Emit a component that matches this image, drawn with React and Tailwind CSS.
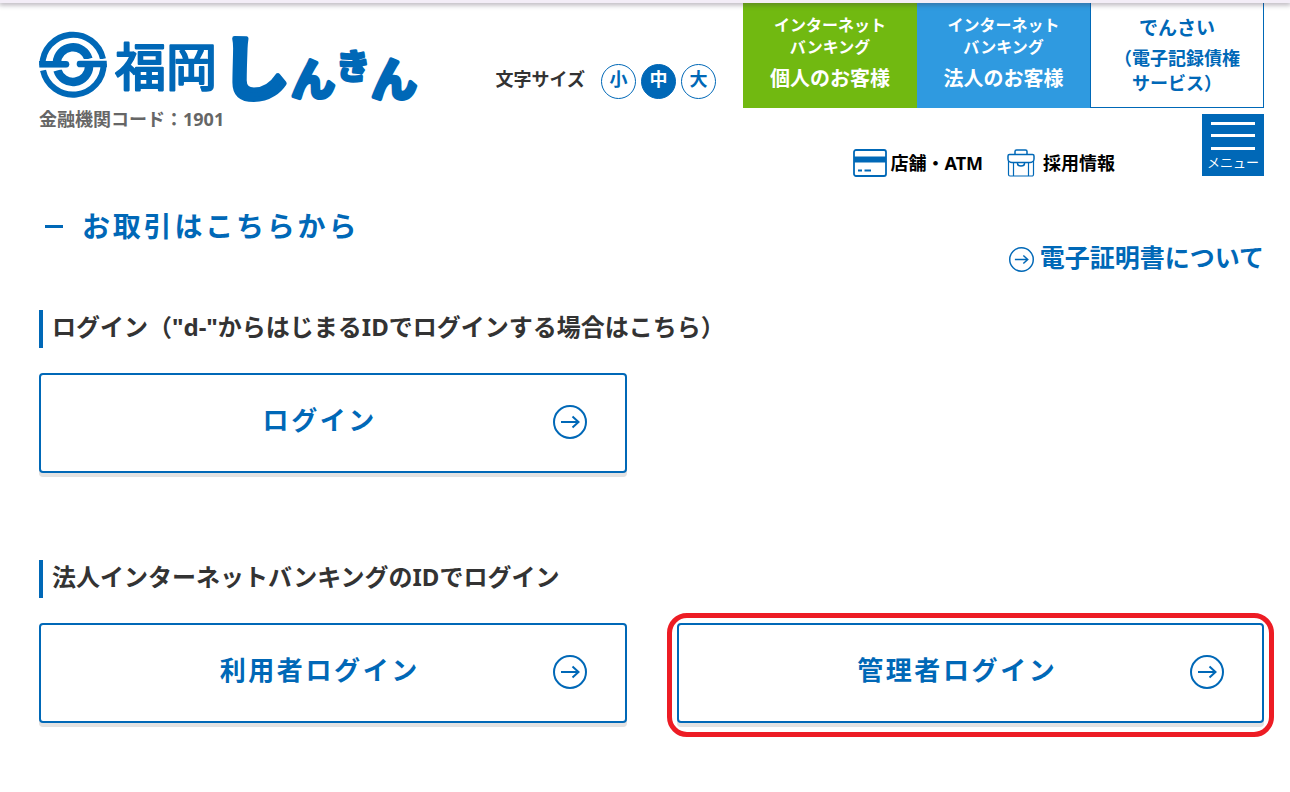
import React from "react";

function Emblem() {
  return (
    <svg viewBox="10 10 202 202" className="h-[68px] w-[68px] shrink-0" aria-hidden="true">
      <g fill="none" stroke="#0068b7">
        <path d="M20 112 A91 91 0 0 1 200 93" strokeWidth="18" />
        <path d="M202 108 A91 91 0 0 1 22 127" strokeWidth="18" />
        <path d="M63 104 A48 48 0 0 1 157 93" strokeWidth="25" />
        <path d="M159 114 A48 48 0 0 1 65 127" strokeWidth="25" />
      </g>
      <path d="M10 99H90a10 10 0 0 1 0 20H11z" fill="#0068b7" />
      <path d="M212 118H132a10 10 0 0 1 0-20H211z" fill="#0068b7" />
      <path d="M120 95.500h92M10 122h92" stroke="#fff" strokeWidth="5" />
    </svg>
  );
}

function Wordmark() {
  return (
    <svg
      viewBox="0 0 310 100"
      className="h-[100px] w-[310px] shrink-0 overflow-visible"
      role="img"
      aria-label="福岡しんきん"
      fontFamily="'Noto Sans CJK JP', sans-serif"
      fontWeight="700"
      fill="#0068b7"
      stroke="#0068b7"
      strokeLinejoin="round"
      strokeLinecap="round"
    >
      <text x="8" y="75" fontSize="51" fontWeight="400" strokeWidth="2.2">福岡</text>
      <text x="113" y="84" fontSize="70" strokeWidth="5">し</text>
      <text x="184" y="85" fontSize="44" strokeWidth="4">ん</text>
      <text x="229" y="68" fontSize="34" strokeWidth="3">き</text>
      <text x="264" y="85" fontSize="46" strokeWidth="4">ん</text>
    </svg>
  );
}

function CircleArrow({ className, width }) {
  return (
    <svg viewBox="0 0 34 34" className={className} fill="none" stroke="#0068b7" strokeWidth={width} aria-hidden="true">
      <circle cx="17" cy="17" r="16" />
      <path d="M8 17h17.500M19.500 11.500l6 5.500-6 5.500" />
    </svg>
  );
}

function CardIcon() {
  return (
    <svg viewBox="0 0 34 28" className="h-7 w-[34px]" aria-hidden="true">
      <rect x="1" y="1" width="32" height="26" rx="2" fill="#fff" stroke="#0068b7" strokeWidth="1.800" />
      <path d="M1 7.500h32v6H1z" fill="#0068b7" />
      <path d="M5 21.500h4M11.500 21.500h6.500" stroke="#0068b7" strokeWidth="1.800" />
    </svg>
  );
}

function BagIcon() {
  return (
    <svg viewBox="0 0 28 28" className="h-7 w-7" fill="none" stroke="#0068b7" strokeWidth="1.500" aria-hidden="true">
      <path d="M8 5.500V2.500a1.500 1.500 0 0 1 1.500-1.500h9a1.500 1.500 0 0 1 1.500 1.500v3" />
      <path d="M2.500 5.500h23a1.500 1.500 0 0 1 1.500 1.500v3c0 2-2 3.500-4 3.500H5c-2 0-4-1.500-4-3.500V7a1.500 1.500 0 0 1 1.500-1.500z" />
      <path d="M1.500 12v13.500a1.500 1.500 0 0 0 1.500 1.500h22a1.500 1.500 0 0 0 1.500-1.500V12M6.500 13.500V27M21.500 13.500V27" strokeWidth="1.200" />
      <path d="M10.500 13.500v1c0 1.700 1 2.500 3.500 2.500s3.500-.8 3.500-2.500v-1" />
    </svg>
  );
}

function BankTab({ color, audience }) {
  return (
    <a href="#" className={`flex h-[105px] flex-col items-center pt-[11px] font-bold text-white ${color}`}>
      <span className="text-center text-base leading-[22px]">
        インターネット
        <br />
        バンキング
      </span>
      <span className="mt-[7px] text-xl leading-7">{audience}</span>
    </a>
  );
}

function LoginButton({ children }) {
  return (
    <button
      type="button"
      className="flex h-[100px] w-full items-center rounded-[4px] border-2 border-[#0068b7] bg-white pr-[38px] pb-0.5 pl-[46px] text-[#0068b7] shadow-[0_4px_0_#e3e2e2]"
    >
      <span className="flex-1 pb-1 text-center text-[26px] font-bold tracking-widest">{children}</span>
      <CircleArrow className="h-[34px] w-[34px]" width="2" />
    </button>
  );
}

function SectionTitle({ children }) {
  return (
    <h3 className="h-[38px] border-l-4 border-[#0068b7] pl-[9px] text-2xl leading-[34px] font-bold text-[#333]">
      {children}
    </h3>
  );
}

const sizes = [
  { label: "小", style: "bg-white text-[#0068b7]" },
  { label: "中", style: "bg-[#0068b7] text-white" },
  { label: "大", style: "bg-white text-[#0068b7]" },
];

export default function App() {
  return (
    <div className="bg-white font-['Noto_Sans','Noto_Sans_CJK_JP',sans-serif] text-[#333]">
      <div className="relative h-[3px] bg-[#f3edf7] shadow-[0_1px_5px_1px_rgba(60,50,70,0.4)]" />

      <header className="flex justify-between pr-[26px] pl-[39px]">
        <div className="pt-2">
          <div className="flex items-center">
            <div className="pt-2">
              <Emblem />
            </div>
            <Wordmark />
          </div>
          <p className="-mt-1 text-lg leading-6 font-bold text-[#666]">金融機関コード：1901</p>
        </div>

        <div className="flex flex-1 flex-col items-end">
          <div className="flex gap-[27px]">
            <div className="flex items-end gap-4 pb-[9px]">
              <span className="pb-1.5 text-lg leading-7 font-bold">文字サイズ</span>
              <div className="flex gap-[5px]">
                {sizes.map((s) => (
                  <button
                    key={s.label}
                    type="button"
                    className={`h-[35px] w-[35px] rounded-full border border-[#0068b7] pb-1.5 text-lg leading-6 font-bold ${s.style}`}
                  >
                    {s.label}
                  </button>
                ))}
              </div>
            </div>
            <nav className="grid grid-cols-[174px_173px_174px]">
              <BankTab color="bg-[#71b911]" audience="個人のお客様" />
              <BankTab color="bg-[#2f9ae0]" audience="法人のお客様" />
              <a
                href="#"
                className="flex h-[105px] flex-col items-center border border-t-0 border-[#0068b7] pt-[11px] text-lg leading-[25px] font-bold text-[#0068b7]"
              >
                <span className="text-[19px] leading-7">でんさい</span>
                <span className="mt-1 whitespace-nowrap">（電子記録債権</span>
                <span className="whitespace-nowrap">サービス）</span>
              </a>
            </nav>
          </div>

          <div className="mt-1.5 flex items-start">
            <div className="mr-[87px] flex items-center gap-6 pt-[35px] text-lg leading-7 font-bold text-black">
              <a href="#" className="flex items-center gap-[3px]">
                <CardIcon />
                <span>店舗・ATM</span>
              </a>
              <a href="#" className="flex items-center gap-2">
                <BagIcon />
                <span>採用情報</span>
              </a>
            </div>
            <button
              type="button"
              className="flex h-[62px] w-[62px] flex-col items-center bg-[#0068b7] pt-2 text-white"
            >
              <span className="h-[3px] w-11 bg-white" />
              <span className="mt-[9px] h-[3px] w-11 bg-white" />
              <span className="mt-2.5 h-[3px] w-11 bg-white" />
              <span className="mt-[3px] text-[13px] leading-[18px]">メニュー</span>
            </button>
          </div>
        </div>
      </header>

      <main className="pr-[26px] pb-[70px] pl-[39px]">
        <div className="flex items-start justify-between pt-[31px]">
          <h2 className="flex items-center pl-1.5 text-[28px] leading-9 font-bold tracking-widest text-[#0068b7]">
            <span className="mr-[19px] h-[3px] w-[18px] bg-[#0068b7]" />
            お取引はこちらから
          </h2>
          <a
            href="#"
            className="mt-[31px] flex items-center gap-1.5 text-[25px] leading-9 font-bold text-[#0068b7]"
          >
            <CircleArrow className="mt-1 h-[25px] w-[25px]" width="2" />
            電子証明書について
          </a>
        </div>

        <section className="mt-[35px]">
          <SectionTitle>ログイン（"d-"からはじまるIDでログインする場合はこちら）</SectionTitle>
          <div className="mt-[25px] grid grid-cols-2 gap-[50px]">
            <LoginButton>ログイン</LoginButton>
          </div>
        </section>

        <section className="mt-[87px]">
          <SectionTitle>法人インターネットバンキングのIDでログイン</SectionTitle>
          <div className="mt-[25px] grid grid-cols-2 gap-[50px]">
            <LoginButton>利用者ログイン</LoginButton>
            <div className="relative">
              <LoginButton>管理者ログイン</LoginButton>
              <div className="pointer-events-none absolute -inset-x-[10px] -top-[10px] -bottom-[14px] rounded-[20px] border-5 border-[#ed1c24]" />
            </div>
          </div>
        </section>
      </main>
    </div>
  );
}
